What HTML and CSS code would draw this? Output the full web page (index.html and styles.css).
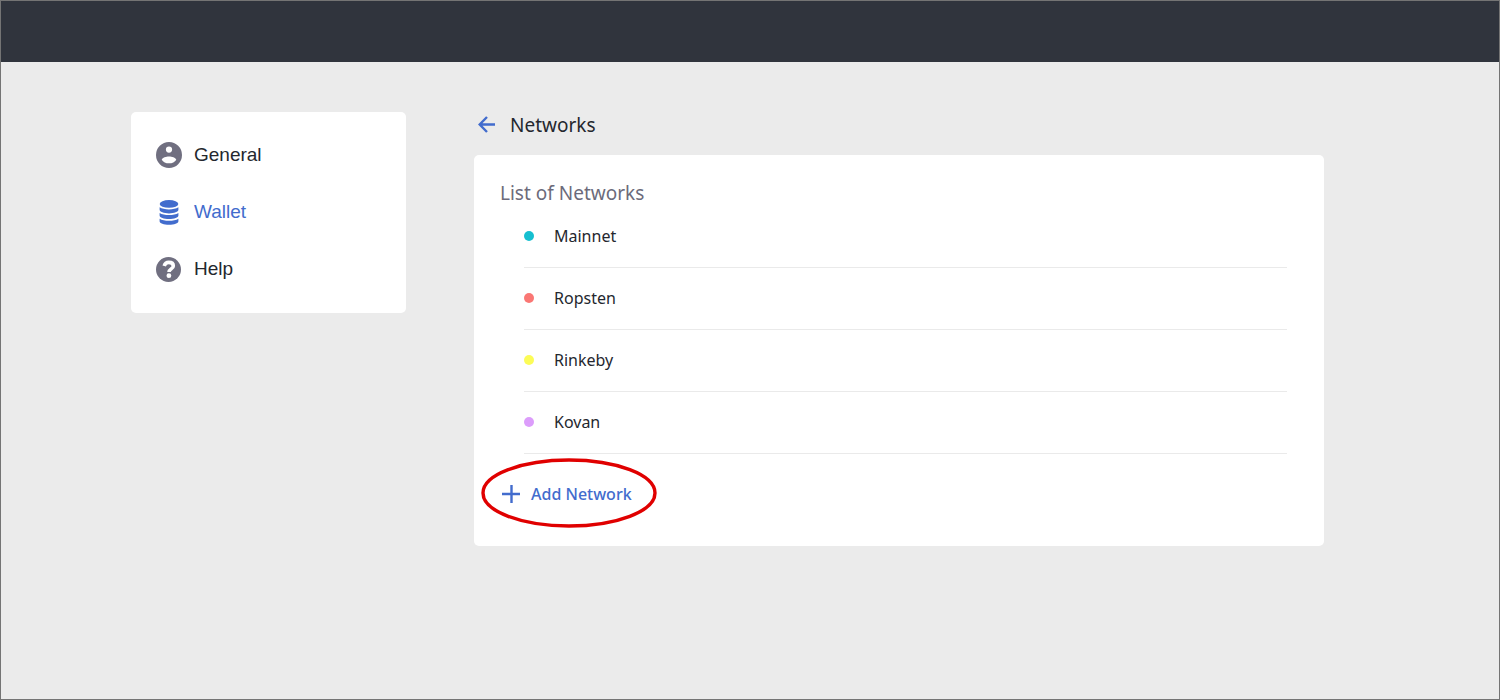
FILE: index.html
```html
<!DOCTYPE html>
<html lang="en">
<head>
<meta charset="utf-8">
<title>Networks</title>
<link rel="stylesheet" href="styles.css">
</head>
<body>
<header class="topbar"></header>
<div class="layout">
  <nav class="sidebar" aria-label="Settings">
    <a class="nav-item" href="#general">
      <svg class="nav-icon" viewBox="2 2 20 20" aria-hidden="true"><path fill="currentColor" d="M12 2a10 10 0 1 0 0 20 10 10 0 0 0 0-20zm0 3.400a2.400 2.400 0 1 1 0 4.800 2.400 2.400 0 0 1 0-4.800zm0 13c-2.500 0-4.500-1.100-5.600-2.800C7 14.100 9.700 13.200 12 13.200s5 .9 5.600 2.400c-1.100 1.700-3.100 2.800-5.600 2.800z"/></svg>
      <span>General</span>
    </a>
    <a class="nav-item nav-item-active" href="#wallet" aria-current="page">
      <svg class="nav-icon" viewBox="0 0 26 26" aria-hidden="true"><g fill="currentColor"><ellipse cx="13" cy="4.900" rx="9.300" ry="3.900"/><path id="disc" d="M3.600 8.300c2.200 1.400 5.600 2.100 9.400 2.100s7.200-.7 9.400-2.100v2.500c0 2.100-4.200 3.600-9.400 3.600s-9.400-1.500-9.400-3.600z"/><use href="#disc" y="5.700"/><use href="#disc" y="11.400"/></g></svg>
      <span>Wallet</span>
    </a>
    <a class="nav-item" href="#help">
      <svg class="nav-icon" viewBox="0 0 26 26" aria-hidden="true"><circle cx="12.500" cy="13.500" r="12.500" fill="currentColor"/><path d="M8.200 9.900C8.800 7.800 10.300 6.400 12.800 6.400c2.600 0 4.500 1.300 4.500 3.500 0 3-4.300 3-4.300 6.200" fill="none" stroke="#fff" stroke-width="3.600"/><circle cx="12.900" cy="19.700" r="2.400" fill="#fff"/></svg>
      <span>Help</span>
    </a>
  </nav>
  <main class="content">
    <div class="heading">
      <a class="back" href="#wallet" aria-label="Back"><svg class="back-icon" viewBox="0 0 18 18" aria-hidden="true"><path d="M9 1 1.700 8.500 9 16M1.700 8.500H17" fill="none" stroke="currentColor" stroke-width="2.400"/></svg></a>
      <h1 class="title">Networks</h1>
    </div>
    <section class="card">
      <h2 class="card-title">List of Networks</h2>
      <ul class="networks">
        <li class="network"><span class="dot dot-mainnet"></span>Mainnet</li>
        <li class="network"><span class="dot dot-ropsten"></span>Ropsten</li>
        <li class="network"><span class="dot dot-rinkeby"></span>Rinkeby</li>
        <li class="network"><span class="dot dot-kovan"></span>Kovan</li>
      </ul>
      <button class="add" type="button">
        <svg class="add-icon" viewBox="0 0 18 18" aria-hidden="true"><path d="M9.500 0v18M0 9h18" stroke="currentColor" stroke-width="2.400"/></svg>
        <span>Add Network</span>
        <svg class="ring" viewBox="0 0 176 70" aria-hidden="true"><ellipse cx="88" cy="35" rx="86" ry="33" fill="none" stroke="#e00000" stroke-width="3.400"/></svg>
      </button>
    </section>
  </main>
</div>
</body>
</html>
```
FILE: styles.css
```css
* { box-sizing: border-box; }
body {
  margin: 0;
  min-height: 100vh;
  border: 1px solid #747474;
  background: #ebebeb;
  color: #24272e;
  font-family: "Noto Sans", sans-serif;
}
.topbar { height: 61px; background: #30343d; }
.layout {
  display: flex;
  align-items: flex-start;
  gap: 68px;
  padding: 50px 175px 50px 130px;
}
.sidebar {
  flex: 0 0 275px;
  display: flex;
  flex-direction: column;
  gap: 31px;
  padding: 30px 25px 31px;
  border-radius: 5px;
  background: #fff;
}
.nav-item {
  display: flex;
  align-items: center;
  gap: 12px;
  color: #24272e;
  font: 19px/26px "Liberation Sans", Arial, sans-serif;
  text-decoration: none;
}
.nav-icon { flex: none; width: 26px; height: 26px; color: #706f80; }
.nav-item-active, .nav-item-active .nav-icon { color: #426ccd; }
.content { flex: 1; min-width: 0; }
.heading { display: flex; align-items: center; gap: 14px; padding-left: 4px; }
.back { display: flex; color: #426ccd; }
.back-icon { width: 18px; height: 18px; }
.title, .card-title { margin: 0; font-size: 19px; line-height: 26px; font-weight: 400; }
.card {
  margin-top: 17px;
  padding: 25px 37px 40px 26px;
  border-radius: 5px;
  background: #fff;
}
.card-title { color: #6c6b7b; }
.networks { margin: 0 0 0 24px; padding: 0; list-style: none; }
.network {
  display: flex;
  align-items: center;
  gap: 20px;
  padding: 18px 0 19px;
  border-bottom: 1px solid #eaeaea;
  font-size: 16px;
  line-height: 24px;
}
.dot { width: 10px; height: 10px; border-radius: 50%; }
.dot-mainnet { background: #16bfd0; }
.dot-ropsten { background: #fa7774; }
.dot-rinkeby { background: #fcfc57; }
.dot-kovan { background: #dc9dfb; }
.add {
  position: relative;
  display: flex;
  align-items: center;
  gap: 11px;
  margin-top: 28px;
  padding: 0 0 0 2px;
  border: 0;
  background: none;
  color: #426ccd;
  font: 500 16px/24px "Noto Sans", sans-serif;
}
.add-icon { width: 18px; height: 18px; }
.ring { position: absolute; left: -19px; top: -24px; width: 176px; height: 70px; pointer-events: none; }
```
